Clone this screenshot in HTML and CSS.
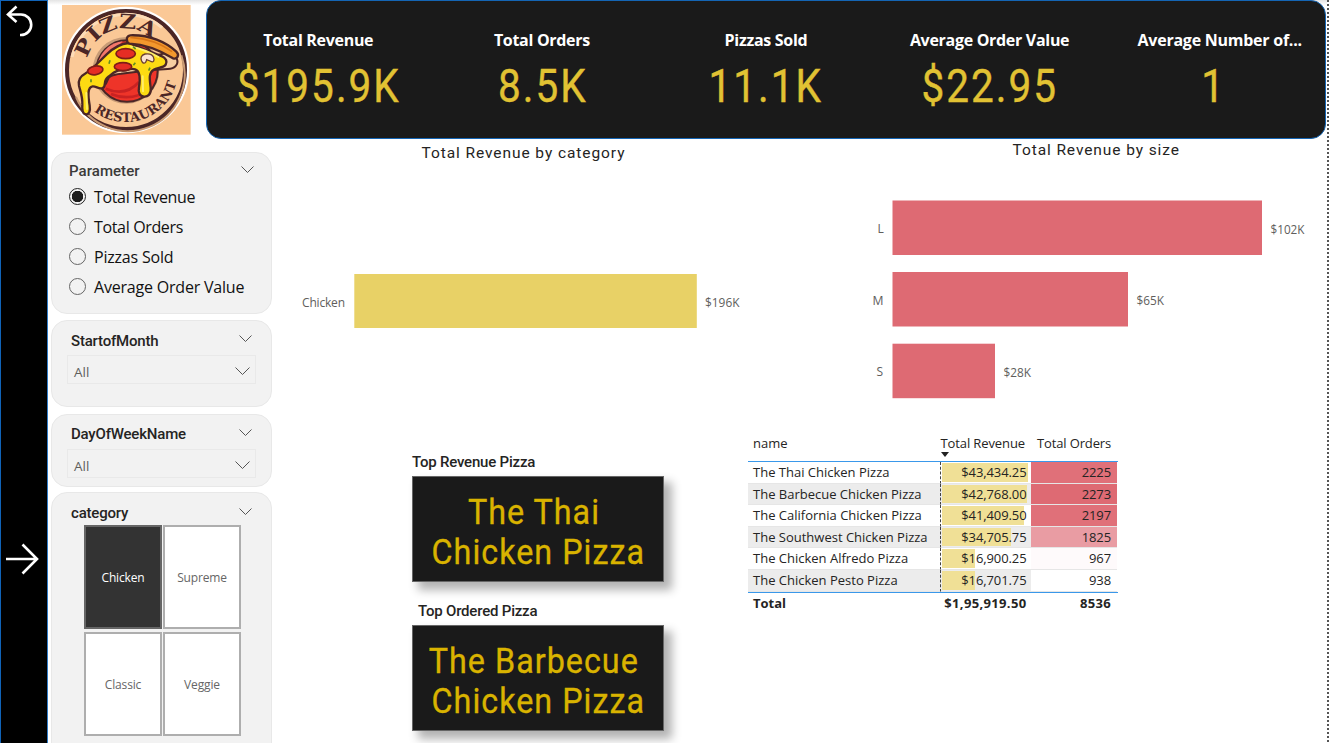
FILE: index.html
```html
<!DOCTYPE html>
<html lang="en">
<head>
<meta charset="utf-8">
<title>Pizza Sales</title>
<link rel="stylesheet" href="styles.css">
</head>
<body>
<div class="app">
  <nav class="rail">
    <svg class="back" width="32" height="32" viewBox="0 0 32 32"><path d="M14.500 1.500 6 9.500l8.500 7.500M6.500 9.500H19a8.500 8.500 0 0 1 0 20.500h-1"/></svg>
    <svg class="next" width="34" height="34" viewBox="0 0 34 34"><path d="M1 17h31M17.500 2.500 32 17 17.500 31.500"/></svg>
  </nav>
  <main class="page">
    <header class="top">
      <svg class="logo" width="129" height="130" viewBox="186 14 387 390">
        <rect x="186" y="14" width="386" height="389" fill="#fac896"/>
        <circle cx="378" cy="209" r="190" fill="#fff"/>
        <circle cx="378" cy="209" r="177" fill="#fac896" stroke="#4b2626" stroke-width="12"/>
        <path d="M228 290a170 170 0 0 0 316-125" fill="none" stroke="#c89a74" stroke-width="6"/>
        <path d="M216 170a166 166 0 0 1 270-88" fill="none" stroke="#fddcb8" stroke-width="9"/>
        <circle cx="378" cy="210" r="100" fill="#c79b76"/>
        <circle cx="381" cy="212" r="92" fill="#ee3429" stroke="#4b2626" stroke-width="6"/>
        <path d="M294 185q22-57 74-62l-58 60z" fill="#f4776a"/>
        <path d="M317 265q60 25 100-20M333 281q60 25 120-15" fill="none" stroke="#c92222" stroke-width="8"/>
        <path id="arcTop" d="M262 175A116 116 0 0 1 466 128" fill="none"/>
        <path id="arcBottom" d="M282 333A157 157 0 0 0 534 215" fill="none"/>
        <text class="logo-big"><textPath href="#arcTop" textLength="244" lengthAdjust="spacingAndGlyphs">PIZZA</textPath></text>
        <text class="logo-small"><textPath href="#arcBottom" textLength="309">RESTAURANT</textPath></text>
        <path d="M317 252c4-24 22-30 46-32l85-10 55-4c22 0 36-16 26-33l-20-18-80 20-95 40z" fill="#f7cfa2" stroke="#4b2626" stroke-width="6"/>
        <path d="M386 128l100 40q19 10 11 25c-6 11-26 8-36 15-16 10-12 30-9 54 3 21-10 28-20 27-13-1-18-13-15-28 3-18 5-46-10-53-18-9-24 6-42 2-16-3-27 10-40 19-18 12-4 28-17 34-10 5-20-6-30-5-16 2-14 29-9 57 3 19-3 27-10 27-12 0-13-15-12-29 1-25-6-40-10-57-4-20 5-29 18-36 24-14 44-38 65-58q32-31 66-34z" fill="#fddb12" stroke="#4b2626" stroke-width="7" stroke-linejoin="round"/>
        <path d="M393 139q40 7 82 31M259 278l2 48M428 228l1 45" fill="none" stroke="#ffee6b" stroke-width="6" stroke-linecap="round"/>
        <path d="M381 120q-3-12 10-15c58-2 107 20 138 49 11 11 2 24-10 20q-67-41-130-44-7-1-8-10z" fill="#f3982d" stroke="#4b2626" stroke-width="7"/>
        <path d="M391 111q75 5 125 43" fill="none" stroke="#d97618" stroke-width="5"/>
        <g fill="#e52d24" stroke="#7d1d18" stroke-width="5">
          <ellipse cx="377" cy="160" rx="29" ry="15"/><ellipse cx="369" cy="199" rx="26" ry="12"/><ellipse cx="286" cy="210" rx="23" ry="13" transform="rotate(-10 286 210)"/>
        </g>
        <path d="M425 182q-7-15 10-21 26-3 27 16 0 12-12 5l-10-4q-3 14-12 9z" fill="#fbe3d0" stroke="#6b4032" stroke-width="4"/>
        <path d="M399 139l8 7M330 180l-3 10M406 187l-6 8M450 202l-4 9M273 237v9" stroke="#608f22" stroke-width="5"/>
      </svg>
      <section class="kpis">
        <div class="kpi k1"><div class="kpi-label">Total Revenue</div><div class="kpi-value">$195.9K</div></div>
        <div class="kpi k2"><div class="kpi-label">Total Orders</div><div class="kpi-value">8.5K</div></div>
        <div class="kpi k3"><div class="kpi-label">Pizzas Sold</div><div class="kpi-value">11.1K</div></div>
        <div class="kpi k4"><div class="kpi-label">Average Order Value</div><div class="kpi-value">$22.95</div></div>
        <div class="kpi k5"><div class="kpi-label">Average Number of...</div><div class="kpi-value">1</div></div>
      </section>
    </header>
    <div class="body">
      <aside class="filters">
        <section class="panel p-param">
          <div class="panel-head"><span>Parameter</span><svg class="chev" width="13" height="8" viewBox="0 0 13 8"><path d="M.5.500l6 6 6-6"/></svg></div>
          <ul class="radios">
            <li><i class="radio on"></i><span class="r1">Total Revenue</span></li>
            <li><i class="radio"></i><span class="r2">Total Orders</span></li>
            <li><i class="radio"></i><span class="r3">Pizzas Sold</span></li>
            <li><i class="radio"></i><span class="r4">Average Order Value</span></li>
          </ul>
        </section>
        <section class="panel p-month">
          <div class="panel-head"><span>StartofMonth</span><svg class="chev" width="13" height="8" viewBox="0 0 13 8"><path d="M.5.500l6 6 6-6"/></svg></div>
          <div class="select"><span>All</span><svg class="chev" width="15" height="9" viewBox="0 0 15 9"><path d="M.5.500l7 7 7-7"/></svg></div>
        </section>
        <section class="panel p-day">
          <div class="panel-head"><span>DayOfWeekName</span><svg class="chev" width="13" height="8" viewBox="0 0 13 8"><path d="M.5.500l6 6 6-6"/></svg></div>
          <div class="select"><span>All</span><svg class="chev" width="15" height="9" viewBox="0 0 15 9"><path d="M.5.500l7 7 7-7"/></svg></div>
        </section>
        <section class="panel p-cat">
          <div class="panel-head"><span>category</span><svg class="chev" width="13" height="8" viewBox="0 0 13 8"><path d="M.5.500l6 6 6-6"/></svg></div>
          <div class="tiles"><div class="tile sel">Chicken</div><div class="tile">Supreme</div><div class="tile">Classic</div><div class="tile">Veggie</div></div>
        </section>
      </aside>
      <div class="content">
        <div class="charts">
          <svg width="508" height="290" viewBox="272 139 508 290">
            <text class="chart-title" x="421.500" y="158" textLength="203">Total Revenue by category</text>
            <rect x="354.300" y="274" width="342.500" height="54" fill="#e8d166"/>
            <text class="chart-label" x="302" y="307" textLength="43">Chicken</text>
            <text class="chart-label" x="705" y="307" textLength="34.500" lengthAdjust="spacingAndGlyphs">$196K</text>
          </svg>
          <svg width="546" height="290" viewBox="780 139 546 290">
            <text class="chart-title" x="1012.500" y="155" textLength="166.500">Total Revenue by size</text>
            <g fill="#de6a73">
              <rect x="892.500" y="200.500" width="369.500" height="54.500"/>
              <rect x="892.500" y="272" width="235.500" height="54.500"/>
              <rect x="892.500" y="343.700" width="102.500" height="54.500"/>
            </g>
            <g class="chart-label">
              <text x="877.500" y="233">L</text><text x="872.500" y="305" textLength="11" lengthAdjust="spacingAndGlyphs">M</text><text x="876.500" y="376">S</text>
              <text x="1270.500" y="234" textLength="34" lengthAdjust="spacingAndGlyphs">$102K</text>
              <text x="1136.500" y="305" textLength="27.500" lengthAdjust="spacingAndGlyphs">$65K</text>
              <text x="1003.500" y="377" textLength="27.500" lengthAdjust="spacingAndGlyphs">$28K</text>
            </g>
          </svg>
        </div>
        <div class="bottom">
          <div class="cards">
            <h3>Top Revenue Pizza</h3>
            <div class="card"><span class="trail">The Thai</span><span>Chicken Pizza</span></div>
            <h3 class="second">Top Ordered Pizza</h3>
            <div class="card"><span class="trail">The Barbecue</span><span>Chicken Pizza</span></div>
          </div>
          <div class="grid">
            <div class="row head"><div class="name">name</div><div class="rev">Total Revenue<i class="sort"></i></div><div class="ord">Total Orders</div></div>
            <div class="row"><div class="name">The Thai Chicken Pizza</div><div class="rev"><i class="bar" style="width:86px"></i><b>$43,434.25</b></div><div class="ord hot2">2225</div></div>
            <div class="row"><div class="name">The Barbecue Chicken Pizza</div><div class="rev"><i class="bar" style="width:84.500px"></i><b>$42,768.00</b></div><div class="ord hot1">2273</div></div>
            <div class="row"><div class="name">The California Chicken Pizza</div><div class="rev"><i class="bar" style="width:82px"></i><b>$41,409.50</b></div><div class="ord hot2">2197</div></div>
            <div class="row"><div class="name">The Southwest Chicken Pizza</div><div class="rev"><i class="bar" style="width:68.500px"></i><b>$34,705.75</b></div><div class="ord hot3">1825</div></div>
            <div class="row"><div class="name">The Chicken Alfredo Pizza</div><div class="rev"><i class="bar" style="width:33px"></i><b>$16,900.25</b></div><div class="ord hot4">967</div></div>
            <div class="row"><div class="name">The Chicken Pesto Pizza</div><div class="rev"><i class="bar" style="width:33px"></i><b>$16,701.75</b></div><div class="ord hot5">938</div></div>
            <div class="row total"><div class="name">Total</div><div class="rev">$1,95,919.50</div><div class="ord">8536</div></div>
          </div>
        </div>
      </div>
    </div>
  </main>
  <div class="edge"></div>
</div>
</body>
</html>
```
FILE: styles.css
```css
* { box-sizing: border-box; }
body { margin: 0; width: 1334px; height: 743px; overflow: hidden; background: #fff; color: #252423; font-family: "Open Sans", "Noto Sans", sans-serif; }
.app { display: flex; height: 743px; }
.rail { width: 48px; flex: none; background: #000; border: solid #1063b8; border-width: 1px 1px 0; border-right: 1.500px solid #2f7cc8; }
.rail svg { display: block; fill: none; stroke: #fff; stroke-width: 2.600; }
.back { margin: 4px 0 0 1px; }
.next { margin: 505px 0 0 4px; }
.page { width: 1279px; flex: none; background: linear-gradient(#e4e4e4, #fff 5px); }
.top { display: flex; height: 139px; }
.logo { margin: 5px 15px 0 14px; flex: none; }
.logo-big { font: bold 60px "DejaVu Serif", serif; fill: #4b2626; }
.logo-small { font: bold 39px "DejaVu Serif", serif; fill: #4b2626; }
.kpis { width: 1120px; height: 139px; flex: none; display: flex; background: #1a1a1a; border: 1px solid #1465b4; border-radius: 15px; }
.kpi { width: 223.700px; text-align: center; padding-top: 28px; white-space: nowrap; }
.kpi-label { color: #fff; font-weight: 700; font-size: 16px; line-height: 22px; letter-spacing: -0.300px; }
.k1 .kpi-label, .k2 .kpi-label { padding-right: 1px; }
.k5 .kpi-label { letter-spacing: -.250px; padding-left: 13px; }
.k5 .kpi-value { padding-left: 2px; }
.kpi-value { font: 400 46px/54px Roboto, sans-serif; color: #e1c233; margin-top: 8px; letter-spacing: 2.300px; transform: scaleX(.88); -webkit-text-stroke: .4px #e1c233; }

.body { display: flex; height: 604px; }
.filters { width: 224px; flex: none; padding: 13px 0 0 3px; }
.panel { width: 221px; background: #f2f2f2; border: 1px solid #e8e8e8; border-radius: 16px; }
.panel-head { display: flex; justify-content: space-between; padding: 0 19px; font: 500 15px/20px Roboto, sans-serif; letter-spacing: -.200px; }
.chev { fill: none; stroke: #555; stroke-width: 1; }
.p-param { height: 162px; }
.p-param .panel-head { padding: 8px 17px 0; color: #3b3a39; letter-spacing: .05px; }
.panel-head .chev { margin-top: 5px; }
.radios { list-style: none; margin: 0; padding: 1px 0 0 17px; }
.radios li { display: flex; align-items: center; height: 30px; font-size: 16px; color: #111; white-space: nowrap; letter-spacing: -.200px; }
.radios .r1 { letter-spacing: -.350px; }
.radios .r2 { letter-spacing: -.350px; }
.radio { width: 17px; height: 17px; margin: -1px 8px 0 0; border: 1px solid #666; border-radius: 50%; flex: none; }
.radio.on { border-color: #222; background: radial-gradient(circle, #1c1c1c 5.500px, transparent 6px); }
.p-month { height: 87px; margin-top: 6px; }
.p-month .panel-head, .p-day .panel-head { padding-top: 10px; }
.p-month .panel-head .chev { margin-top: 4px; }
.select { display: flex; justify-content: space-between; align-items: center; width: 189px; height: 29px; margin: 4px 0 0 15px; padding: 4px 5px 0 6px; border: 1px solid #e9e9e9; color: #605e5c; font-size: 13.500px; }
.p-day { height: 73px; margin-top: 7px; }
.p-day .panel-head { padding-top: 9px; }
.p-day .select { margin-top: 5px; }
.p-cat { height: 270px; margin-top: 5px; }
.p-cat .panel-head { padding-top: 10px; }
.tiles { display: grid; grid-template-columns: 78px 78px; grid-auto-rows: 104px; column-gap: 1px; row-gap: 3px; margin: 2px 0 0 32px; }
.tile { display: grid; place-items: center; border: 2px solid #aeaeae; background: #fff; color: #666; font-size: 12px; letter-spacing: -.150px; }
.tile.sel { background: #333; color: #fff; border-color: #666; }

.content { width: 1054px; flex: none; }
.charts { display: flex; height: 290px; }
.charts svg { flex: none; }
.chart-title { font: 15.500px Roboto, sans-serif; fill: #252423; }
.chart-label { font-size: 12px; fill: #605e5c; }
.bottom { display: flex; }
.cards { width: 252px; margin: 24px 84px 0 140px; flex: none; }
.cards h3 { margin: 0; font: 500 15px/18px Roboto, sans-serif; letter-spacing: -.200px; }
.cards h3.second { margin: 20px 0 0 6px; }
.card { display: flex; flex-direction: column; align-items: center; height: 106px; margin-top: 5px; padding-top: 16px; background: #1a1a1a; border: 1px solid #666; box-shadow: 7px 7px 9px 1px rgba(0,0,0,.3); color: #d9b300; font: 400 35.500px/39.500px Roboto, sans-serif; white-space: nowrap; -webkit-text-stroke: .35px #d9b300; }
.card span { transform: scaleX(.91); letter-spacing: 1.100px; }
.card .trail { padding-right: 9px; }
.grid { width: 370px; margin-top: 0; font-size: 13px; flex: none; }
.row { display: flex; height: 21.600px; line-height: 21.500px; white-space: nowrap; }
.row > div { border-bottom: 1px solid #e6e6e6; }
.name { width: 192px; padding-left: 5px; }
.rev { width: 91px; padding-right: 4.500px; text-align: right; position: relative; letter-spacing: -.100px; }
.ord { width: 86px; padding-right: 6px; text-align: right; letter-spacing: -.100px; }
.row:nth-child(odd):not(.total) > div { background-color: #ececec; }
.row .bar { position: absolute; left: 1px; top: 1px; bottom: 1px; background: #f0e096; }
.rev b { position: relative; font-weight: 400; }
.row:not(.head):not(.total) .rev { border-left: 1px dashed #444; }
.row.head { height: 33px; padding-top: 4px; border-bottom: 1px solid #3a98ea; line-height: 21px; }
.row.head > div { border: 0; background: none !important; }
.row.head .rev { padding-right: 6px; }
.row.head .ord { letter-spacing: -.150px; }
.sort { position: absolute; left: 1px; bottom: 4px; border: solid transparent; border-width: 5px 4.500px 0; border-top-color: #222; }
.row .hot1, .row:nth-child(odd) > .hot1 { background-color: #de6a73 !important; }
.row .hot2 { background-color: #e07079 !important; }
.row .hot3 { background-color: #e99ca3 !important; }
.row .hot4 { background-color: #fefafb !important; }
.row .hot5 { background-color: #fff !important; }
.row.total { border-top: 1px solid #3a98ea; font-weight: 700; height: 25px; line-height: 21px; }
.row.total > div { border: 0; }
.row.total .rev { letter-spacing: .350px; }
.row.total .ord { letter-spacing: .300px; }
.edge { width: 2px; margin-left: 0; background: repeating-linear-gradient(#555 0 2px, #fff 2px 4px); }
```
